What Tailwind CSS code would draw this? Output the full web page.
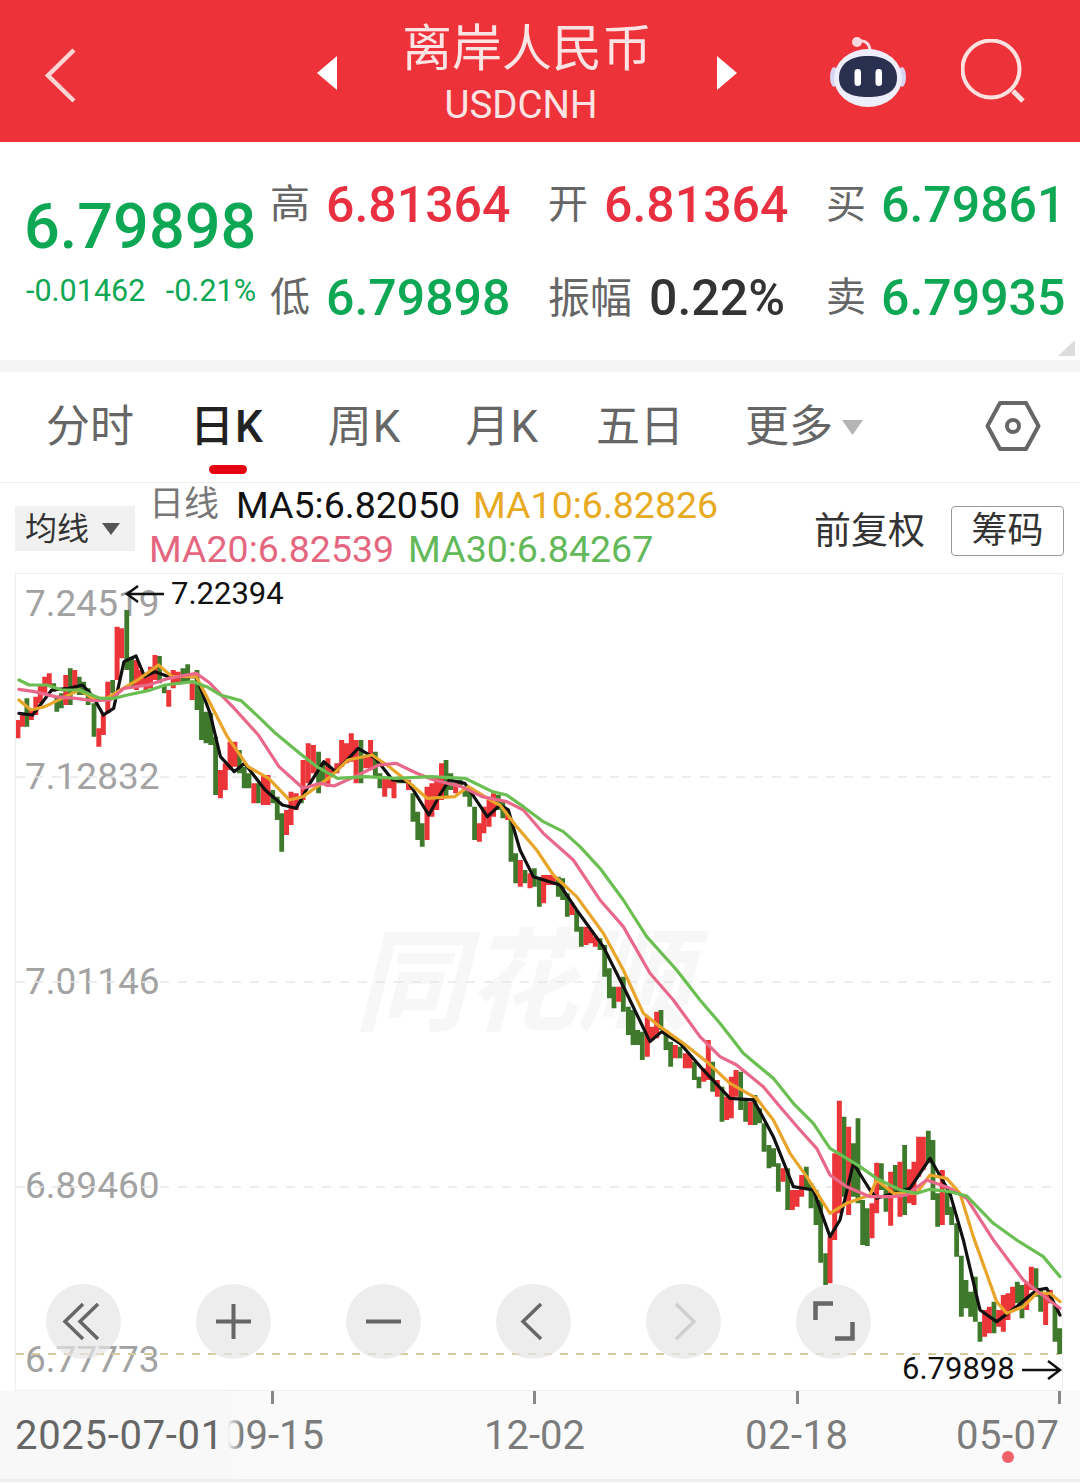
<!DOCTYPE html>
<html lang="zh">
<head>
<meta charset="utf-8">
<title>离岸人民币 USDCNH</title>
<script src="https://cdn.jsdelivr.net/npm/@tailwindcss/browser@4"></script>
</head>
<body class="m-0 bg-white">
<div class="w-[1080px] h-[1483px] overflow-hidden bg-white font-[Roboto,'Noto_Sans_CJK_SC',sans-serif] whitespace-nowrap">

  <header class="h-[142px] bg-[#EE3239] flex items-center pl-[44px] text-[#fde4e4]">
    <svg class="w-[33px] h-[56px] mt-[8px]" viewBox="0 0 33 56" fill="none"><path d="M30 3 4 28.500 30 54" stroke="#fbd5d5" stroke-width="4.500"/></svg>
    <svg class="ml-[240px] w-[20px] h-[34px] mt-[4px]" viewBox="0 0 20 34"><path d="M20 0V34L0 17Z" fill="#fff"/></svg>
    <div class="w-[380px] h-full flex flex-col items-center pt-[21px]">
      <div class="text-[50px] leading-[56px]">离岸人民币</div>
      <div class="text-[38.500px] leading-[56px] pr-[12px]">USDCNH</div>
    </div>
    <svg class="w-[20px] h-[34px] mt-[4px]" viewBox="0 0 20 34"><path d="M0 0V34L20 17Z" fill="#fff"/></svg>
    <svg class="ml-[92px] w-[78px] h-[72px] mt-[2px]" viewBox="0 0 78 72" fill="none">
      <path d="M28 6C36 3 41 8 41 15" stroke="#f6d9e0" stroke-width="3"/>
      <circle cx="28" cy="6" r="5" fill="#f6d9e0"/>
      <ellipse cx="5" cy="41" rx="4" ry="10" fill="#d5d5f2"/>
      <ellipse cx="73" cy="41" rx="4" ry="10" fill="#d5d5f2"/>
      <ellipse cx="39" cy="42" rx="34" ry="29" fill="#eeeefb"/>
      <path d="M10 42C10 28 21 20 39 20S68 28 68 42 56 61 39 61 10 56 10 42Z" fill="#2a3050"/>
      <rect x="25.500" y="33" width="6.500" height="17" rx="3.250" fill="#fff"/>
      <rect x="46.500" y="33" width="6.500" height="17" rx="3.250" fill="#fff"/>
    </svg>
    <svg class="ml-[54px] w-[66px] h-[66px] mt-[2px]" viewBox="0 0 66 66" fill="none">
      <circle cx="30" cy="30" r="28.500" stroke="#fde0e0" stroke-width="4"/>
      <path d="M52 52 62 62" stroke="#fde0e0" stroke-width="5"/>
    </svg>
  </header>

  <section class="relative h-[218px] flex">
    <div class="w-[270px] pl-[24px] pt-[50px] text-[#0EA754]">
      <div class="text-[63px] leading-[70px] font-medium">6.79898</div>
      <div class="ml-[2px] mt-[14px] text-[30.500px] leading-[30px] flex w-[230px] justify-between"><span>-0.01462</span><span>-0.21%</span></div>
    </div>
    <div class="grid grid-cols-[278px_278px_253px] grid-rows-[70px_70px] gap-y-[23px] pt-[28px] text-[40px] text-[#666] font-normal">
      <div class="flex items-center gap-[16px]"><span>高</span><span class="text-[50px] text-[#E93040] font-medium">6.81364</span></div>
      <div class="flex items-center gap-[16px]"><span>开</span><span class="text-[50px] text-[#E93040] font-medium">6.81364</span></div>
      <div class="flex items-center gap-[15px]"><span>买</span><span class="text-[50px] text-[#0EA754] font-medium">6.79861</span></div>
      <div class="flex items-center gap-[16px]"><span>低</span><span class="text-[50px] text-[#0EA754] font-medium">6.79898</span></div>
      <div class="flex items-center gap-[17px]"><span class="text-[42px]">振幅</span><span class="text-[50px] text-[#333] font-medium">0.22%</span></div>
      <div class="flex items-center gap-[15px]"><span>卖</span><span class="text-[50px] text-[#0EA754] font-medium">6.79935</span></div>
    </div>
    <svg class="absolute left-[1058px] top-[198px] w-[17px] h-[16px]" viewBox="0 0 17 16"><path d="M17 0V16H0Z" fill="#dcdcdc"/></svg>
  </section>

  <div class="h-[12px] bg-[#f5f5f5]"></div>

  <nav class="relative h-[111px] border-b border-[#eeeeee] flex items-center text-[44px] text-[#666]">
    <span class="ml-[46px]">分时</span>
    <span class="ml-[56px] text-[#222] font-medium tracking-[1px]">日K</span>
    <span class="ml-[64px] tracking-[1px]">周K</span>
    <span class="ml-[64px] tracking-[1px]">月K</span>
    <span class="ml-[57px]">五日</span>
    <span class="ml-[61px]">更多</span>
    <svg class="ml-[9px] w-[21px] h-[15px]" viewBox="0 0 21 15"><path d="M0 0H21L10.500 15Z" fill="#b5b5b5"/></svg>
    <svg class="ml-auto mr-[39px] w-[56px] h-[50px] mb-[2px]" viewBox="0 0 56 50" fill="none">
      <path d="M15 2H41L53.500 25 41 48H15L2.500 25Z" stroke="#666" stroke-width="4" stroke-linejoin="round"/>
      <circle cx="28" cy="25" r="6" stroke="#666" stroke-width="4"/>
    </svg>
    <div class="absolute left-[209px] top-[93px] w-[38px] h-[9px] rounded-full bg-[#E60012]"></div>
  </nav>

  <div class="relative h-[90px]">
    <div class="absolute left-[15px] top-[23px] w-[120px] h-[45px] bg-[#f1f1f1] flex items-center pl-[10px] text-[32px] text-[#333]">
      <span>均线</span>
      <svg class="ml-[13px] w-[18px] h-[12px]" viewBox="0 0 18 12"><path d="M0 0H18L9 12Z" fill="#555"/></svg>
    </div>
    <div class="absolute left-[149px] top-0 text-[37.500px] leading-[44px]">
      <div class="flex"><span class="text-[#777] text-[35px]">日线</span><span class="ml-[17px] text-[#111]">MA5:6.82050</span><span class="ml-[13px] text-[#E8A923]">MA10:6.82826</span></div>
      <div class="flex"><span class="text-[#E5677F]">MA20:6.82539</span><span class="ml-[14px] text-[#63B95A]">MA30:6.84267</span></div>
    </div>
    <div class="absolute left-[814px] top-[23px] flex items-center gap-[26px]">
      <span class="text-[37px] leading-[49px] text-[#333]">前复权</span>
      <span class="w-[113px] h-[50px] border border-[#999] rounded-[4px] flex items-center justify-center text-[36px] text-[#333]">筹码</span>
    </div>
  </div>

  <div class="relative ml-[15px] w-[1048px] h-[818px] border border-[#eeeeee] overflow-hidden">
    <div class="absolute left-[338px] top-[345px] text-[112px] leading-[130px] italic font-bold text-[#f7f7f7]">同花顺</div>
    <div class="absolute left-[9px] top-[8px] text-[37px] leading-[44px] text-[#a2a2a2]">7.24519</div>
    <div class="absolute left-[9px] top-[181px] text-[37px] leading-[44px] text-[#a2a2a2]">7.12832</div>
    <div class="absolute left-[9px] top-[386px] text-[37px] leading-[44px] text-[#a2a2a2]">7.01146</div>
    <div class="absolute left-[9px] top-[590px] text-[37px] leading-[44px] text-[#a2a2a2]">6.89460</div>
    <div class="absolute left-[9px] top-[764px] text-[37px] leading-[44px] text-[#a2a2a2]">6.77773</div>

    <svg class="absolute left-0 top-0 w-[1046px] h-[816px]" viewBox="16 574 1046 816" fill="none">
      <g stroke="#e8e8e8" stroke-width="1.500" stroke-dasharray="9 9">
        <path d="M16 777H1060M16 982H1060M16 1187H1060"/>
      </g>
      <path d="M16 1354H1060" stroke="#d6c99e" stroke-width="2" stroke-dasharray="8 8"/>
      <!-- candles, left part -->
      <g transform="translate(0 570) scale(.3444 .3333)">
        <path vector-effect="non-scaling-stroke" stroke="#3F7A2C" stroke-width="4.800" d="M78 385V470M156 340V365M165 380V425M178 370V415M204 295V405M230 320V375M243 335V375M256 355V405M273 400V500M327 330V370M368 120V300M382 260V350M463 258V340M477 345V370M531 295V340M545 283V335M572 300V420M585 350V510M598 425V520M612 430V525M626 500V675M695 540V610M709 590V655M723 610V655M750 640V700M792 660V700M805 680V750M818 730V845M875 680V700M925 545V670M938 580V640M1048 510V640M1090 545V620M1103 610V655M1158 620V640M1172 625V640M1199 670V755M1213 725V810M1226 760V830M1295 570V680M1309 610V660M1336 630V650M1350 650V680M1364 660V710M1378 710V810M1447 675V720M1460 690V745"/>
        <path vector-effect="non-scaling-stroke" stroke="#EC3539" stroke-width="5" d="M52 450V505M65 430V470M91 420V450M104 380V435M117 345V400M130 320V370M143 310V350M191 315V405M217 300V365M287 475V530M300 430V495M313 335V430M340 170V330M353 175V265M396 270V360M410 300V345M424 320V360M437 290V355M450 255V330M490 360V410M503 300V355M517 305V345M558 340V390M640 600V685M654 580V660M668 515V600M682 515V590M737 640V700M765 615V705M778 615V705M832 720V795M845 665V765M860 670V720M880 570V690M895 520V640M910 525V610M952 565V650M965 600V620M978 580V610M992 510V590M1006 520V580M1020 490V575M1034 510V640M1062 555V595M1076 510V600M1117 620V680M1131 625V655M1144 630V685M1186 630V660M1240 650V810M1254 640V740M1268 620V720M1282 580V690M1323 640V670M1392 760V815M1405 710V790M1420 690V770M1433 670V740M1474 720V750"/>
      </g>
      <!-- candles, middle part -->
      <g transform="translate(480 760) scale(.3333)">
        <path vector-effect="non-scaling-stroke" stroke="#3F7A2C" stroke-width="4.800" d="M93 180V305M107 280V370M135 330V370M163 325V380M178 350V440M235 350V410M248 355V420M262 400V470M290 450V515M304 500V560M360 535V570M374 555V650M388 625V715M402 680V745M430 650V755M445 740V825M459 750V855M473 810V855M487 815V900M543 750V810M558 810V870M572 845V920M600 860V895M643 905V960M657 950V985M698 905V995M726 980V1085M782 935V1050M797 1020V1085M825 1005V1095M839 1045V1090"/>
        <path vector-effect="non-scaling-stroke" stroke="#EC3539" stroke-width="5" d="M121 300V380M150 340V385M191 345V430M205 345V375M220 345V375M276 430V465M318 500V555M332 510V550M346 530V560M416 680V725M502 770V890M516 800V840M530 755V835M586 855V895M616 880V925M630 885V925M671 925V965M685 840V960M712 960V1010M740 1010V1080M754 950V1075M768 930V1010M811 1025V1095"/>
      </g>
      <!-- candles, right part -->
      <g transform="translate(760 1080) scale(.3333)">
        <path vector-effect="non-scaling-stroke" stroke="#3F7A2C" stroke-width="4.800" d="M12 130V215M27 195V265M41 205V260M55 250V335M83 265V390M139 260V330M153 310V385M168 330V435M182 360V548M197 520V615M252 110V350M280 190V350M294 115V370M308 360V495M322 385V498M364 250V330M378 320V395M406 255V350M434 195V405M505 152V250M519 180V360M533 340V440M561 330V405M575 380V435M590 430V530M604 527V710M618 600V685M632 635V710M646 590V725M660 725V785M702 665V760M772 605V670M786 615V715M828 565V650M842 630V695M885 675V785M899 745V822"/>
        <path vector-effect="non-scaling-stroke" stroke="#EC3539" stroke-width="5" d="M69 265V305M97 330V390M111 330V380M125 285V350M210 470V610M224 220V480M238 62V400M266 140V405M336 370V475M350 248V400M392 275V437M420 245V410M448 268V370M462 245V375M476 170V290M490 170V270M547 270V435M674 690V770M688 680V760M716 690V740M730 645V755M744 640V720M758 620V690M800 610V690M814 560V630M857 640V735M871 630V670"/>
      </g>
      <!-- moving averages -->
      <g stroke-width="3.200" stroke-linejoin="round" stroke-linecap="round">
        <g transform="translate(0 570) scale(.3444 .3333)">
          <polyline vector-effect="non-scaling-stroke" stroke="#111" points="55,430 95,435 150,360 200,355 240,345 270,380 300,435 330,415 360,275 395,258 420,320 450,305 490,320 570,320 610,430 640,560 680,605 710,580 770,660 820,705 860,715 900,640 940,575 975,605 1040,535 1090,565 1140,630 1185,635 1245,735 1280,670 1305,630 1350,640 1415,740"/>
          <polyline vector-effect="non-scaling-stroke" stroke="#E9A52A" points="55,390 90,420 130,410 180,385 230,360 270,385 310,385 350,360 400,330 460,285 500,320 570,320 610,400 660,500 720,590 780,625 840,690 880,680 960,620 1010,570 1080,555 1130,590 1190,640 1240,685 1320,680 1360,650 1440,700"/>
          <polyline vector-effect="non-scaling-stroke" stroke="#E9688A" points="55,358 100,365 160,380 220,385 270,392 320,390 360,355 430,345 490,325 570,310 610,340 680,415 750,495 810,590 880,655 930,640 970,648 1030,620 1100,585 1150,580 1210,610 1260,630 1340,650 1400,680"/>
          <polyline vector-effect="non-scaling-stroke" stroke="#6BBE52" points="55,330 85,345 135,345 180,360 230,360 290,385 330,385 370,375 430,362 480,345 560,335 600,350 640,375 700,392 750,440 800,490 870,550 920,590 980,625 1060,620 1150,625 1250,620 1350,625 1430,665"/>
        </g>
        <g transform="translate(480 760) scale(.3333)">
          <polyline vector-effect="non-scaling-stroke" stroke="#111" points="22,170 60,135 85,150 120,270 160,350 240,375 290,450 370,560 440,700 510,845 545,815 600,850 670,930 750,1015 820,1020"/>
          <polyline vector-effect="non-scaling-stroke" stroke="#E9A52A" points="48,130 60,135 110,200 170,270 220,345 290,410 370,520 430,630 490,760 540,800 610,850 680,905 750,970 830,1015"/>
          <polyline vector-effect="non-scaling-stroke" stroke="#E9688A" points="6,110 80,125 130,150 190,220 280,300 360,420 430,500 510,640 580,720 660,830 720,890 770,915 850,980"/>
          <polyline vector-effect="non-scaling-stroke" stroke="#6BBE52" points="37,95 80,105 130,140 190,185 250,215 300,260 360,325 430,420 500,530 590,630 660,720 720,790 790,880 880,955"/>
        </g>
        <g transform="translate(760 1080) scale(.3333)">
          <polyline vector-effect="non-scaling-stroke" stroke="#111" points="-20,60 0,95 40,170 100,320 160,330 210,470 240,420 280,250 330,330 350,355 400,340 450,325 510,235 570,340 610,480 660,690 710,725 770,680 830,630 860,625 900,705"/>
          <polyline vector-effect="non-scaling-stroke" stroke="#E9A52A" points="-10,55 40,120 90,220 140,290 210,400 260,370 330,345 350,300 400,340 470,340 510,285 560,295 600,340 640,470 710,665 740,700 790,680 830,640 870,640 900,665"/>
          <polyline vector-effect="non-scaling-stroke" stroke="#E9688A" points="10,20 60,80 120,150 170,205 210,285 260,320 330,350 400,350 440,345 500,300 570,325 620,355 700,480 790,600 840,640 900,685"/>
          <polyline vector-effect="non-scaling-stroke" stroke="#6BBE52" points="40,-5 100,70 160,130 210,205 260,235 300,260 350,295 420,330 470,340 510,328 570,335 620,348 700,430 770,480 850,530 900,590"/>
        </g>
      </g>
      <!-- high and low markers -->
      <path d="M164 594H128M138 586 127 594 138 602" stroke="#111" stroke-width="2.500"/>
      <path d="M1022 1370H1059M1048 1361 1060 1370 1048 1379" stroke="#111" stroke-width="2.500"/>
    </svg>

    <div class="absolute left-[155px] top-[2px] text-[31px] leading-[36px] text-[#111]">7.22394</div>
    <div class="absolute left-[886px] top-[777px] text-[31px] leading-[36px] text-[#111]">6.79898</div>

    <div class="absolute left-[30px] top-[710px] flex gap-[75px]">
      <div class="w-[75px] h-[75px] rounded-full bg-[#e6e6e6]/70">
        <svg class="w-[75px] h-[75px]" viewBox="0 0 75 75" fill="none" stroke="#666" stroke-width="3.500"><path d="M37 20 19 37.500 37 55M52 20 34 37.500 52 55"/></svg>
      </div>
      <div class="w-[75px] h-[75px] rounded-full bg-[#e6e6e6]/70">
        <svg class="w-[75px] h-[75px]" viewBox="0 0 75 75" fill="none" stroke="#666" stroke-width="4"><path d="M20 37.500H55M37.500 20V55"/></svg>
      </div>
      <div class="w-[75px] h-[75px] rounded-full bg-[#e6e6e6]/70">
        <svg class="w-[75px] h-[75px]" viewBox="0 0 75 75" fill="none" stroke="#666" stroke-width="4"><path d="M20 37.500H55"/></svg>
      </div>
      <div class="w-[75px] h-[75px] rounded-full bg-[#e6e6e6]/70">
        <svg class="w-[75px] h-[75px]" viewBox="0 0 75 75" fill="none" stroke="#666" stroke-width="3.500"><path d="M45 20 27 37.500 45 55"/></svg>
      </div>
      <div class="w-[75px] h-[75px] rounded-full bg-[#e6e6e6]/70">
        <svg class="w-[75px] h-[75px]" viewBox="0 0 75 75" fill="none" stroke="#cfcfcf" stroke-width="3.500"><path d="M30 20 48 37.500 30 55"/></svg>
      </div>
      <div class="w-[75px] h-[75px] rounded-full bg-[#e6e6e6]/70">
        <svg class="w-[75px] h-[75px]" viewBox="0 0 75 75" fill="none" stroke="#666" stroke-width="4.500"><path d="M19.500 36V19.500H37M39 54.500H56.500V38"/></svg>
      </div>
    </div>
  </div>

  <div class="relative h-[88px] bg-[#fafafa] text-[40px] leading-[44px] text-[#7c7c7c]">
    <span class="absolute left-[271px] top-0 w-[3px] h-[13px] bg-[#888]"></span>
    <span class="absolute left-[533px] top-0 w-[3px] h-[13px] bg-[#888]"></span>
    <span class="absolute left-[796px] top-0 w-[3px] h-[13px] bg-[#888]"></span>
    <span class="absolute left-[1058px] top-0 w-[3px] h-[13px] bg-[#888]"></span>
    <span class="absolute left-[223px] top-[23px]">09-15</span>
    <div class="absolute left-0 top-0 w-[242px] h-full bg-linear-to-r from-[#f8f8f8] from-[94%] to-transparent"></div>
    <span class="absolute left-[15px] top-[23px] text-[#666] tracking-[.7px]">2025-07-01</span>
    <span class="absolute left-[484px] top-[23px]">12-02</span>
    <span class="absolute left-[745px] top-[23px] tracking-[.5px]">02-18</span>
    <span class="absolute left-[956px] top-[23px] tracking-[.5px]">05-07</span>
    <span class="absolute left-[1002px] top-[60px] w-[12px] h-[12px] rounded-full bg-[#F0626A]"></span>
  </div>
  <div class="h-[3px] bg-[#eeeeee]"></div>
</div>
</body>
</html>
